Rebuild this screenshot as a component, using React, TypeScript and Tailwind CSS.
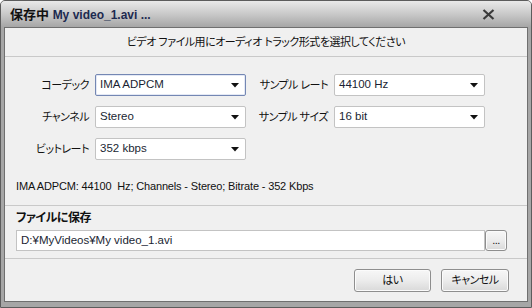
import React from 'react';

const font = "font-['Liberation_Sans','Noto_Sans_CJK_JP',sans-serif] [font-feature-settings:'palt']";

const Arrow = () => (
  <svg width="8" height="5" viewBox="0 0 8 5" className="shrink-0">
    <path d="M0 0h8L4 4.5z" fill="#111" />
  </svg>
);

const Select = ({ value, focused }: { value: string; focused?: boolean }) => (
  <div
    className={`flex h-[22px] items-center justify-between rounded-[2px] border bg-white pl-[4px] pr-[6px] text-[11.5px] text-[#1a1f33] ${
      focused ? 'border-[#7487b3] shadow-[inset_0_0_0_1px_#e4e9f5]' : 'border-[#c3c3c3]'
    }`}
  >
    <span>{value}</span>
    <Arrow />
  </div>
);

const Label = ({ children }: { children: React.ReactNode }) => (
  <div className="flex h-[22px] items-center justify-end whitespace-nowrap text-[11px] tracking-[-0.5px] text-[#111]">
    {children}
  </div>
);

const Button = ({ children, className = '' }: { children: React.ReactNode; className?: string }) => (
  <button
    className={`flex items-center justify-center rounded-[3px] border border-[#8e8e8e] bg-gradient-to-b from-[#f7f7f7] via-[#ececec] to-[#d9d9d9] text-[11px] tracking-[-0.5px] text-[#111] shadow-[inset_0_0_0_1px_#fbfbfb] ${className}`}
  >
    {children}
  </button>
);

export default function App() {
  return (
    <div className={`flex h-[308px] w-[532px] flex-col rounded-t-[5px] border border-[#5c5c5c] bg-[#a6a6a6] ${font}`}>
      {/* title bar */}
      <div className="flex h-[26px] shrink-0 items-center justify-between rounded-t-[4px] bg-gradient-to-b from-[#e9e9e9] via-[#c9c9c9] to-[#a6a6a6] pl-[9px] pr-[36px]">
        <div className="font-bold leading-none">
          <span className="text-[13px] text-[#111]">保存中 </span>
          <span className="text-[12px] text-[#1d2a50]">My video_1.avi ...</span>
        </div>
        <svg width="13" height="11" viewBox="0 0 13 11">
          <path d="M1.5 1l10 9M11.5 1l-10 9" stroke="#3a3a3a" strokeWidth="2.2" />
        </svg>
      </div>

      {/* body */}
      <div className="flex flex-1 flex-col px-[3px] pb-[5px]">
        <div className="flex flex-1 flex-col border border-[#6f6f6f] bg-[#f0f0f0]">
          <div className="flex h-[29px] shrink-0 items-center justify-center border-b border-[#c9c9c9] text-[11px] tracking-[-0.5px] text-[#111]">
            ビデオ ファイル用にオーディオ トラック形式を選択してください
          </div>

          <div className="grid grid-cols-[84px_151px_76px_151px] gap-x-[6px] gap-y-[10px] pt-[17px]">
            <Label>コーデック</Label>
            <Select value="IMA ADPCM" focused />
            <Label>サンプル レート</Label>
            <Select value="44100 Hz" />
            <Label>チャンネル</Label>
            <Select value="Stereo" />
            <Label>サンプル サイズ</Label>
            <Select value="16 bit" />
            <Label>ビットレート</Label>
            <Select value="352 kbps" />
          </div>

          <div className="pl-[11px] pt-[19px] text-[11px] leading-[14px] tracking-[-0.15px] text-[#111] whitespace-pre">
            IMA ADPCM: 44100  Hz; Channels - Stereo; Bitrate - 352 Kbps
          </div>

          <div className="mt-[12px] border-t border-[#c9c9c9] px-[11px] pt-[4px]">
            <div className="text-[12px] font-bold leading-[16px] tracking-[-0.5px] text-[#111]">ファイルに保存</div>
            <div className="mt-[4px] flex h-[21px] pr-[9px]">
              <div className="flex flex-1 items-center border border-[#c3c3c3] bg-white pl-[4px] text-[11.5px] text-[#1a1f33]">
                D:¥MyVideos¥My video_1.avi
              </div>
              <Button className="w-[22px] leading-none">...</Button>
            </div>
          </div>

          <div className="mt-[7px] flex flex-1 items-center justify-end gap-[10px] border-t border-[#c9c9c9] pr-[18px]">
            <Button className="h-[23px] w-[77px]">はい</Button>
            <Button className="h-[23px] w-[68px]">キャンセル</Button>
          </div>
        </div>
      </div>
    </div>
  );
}
